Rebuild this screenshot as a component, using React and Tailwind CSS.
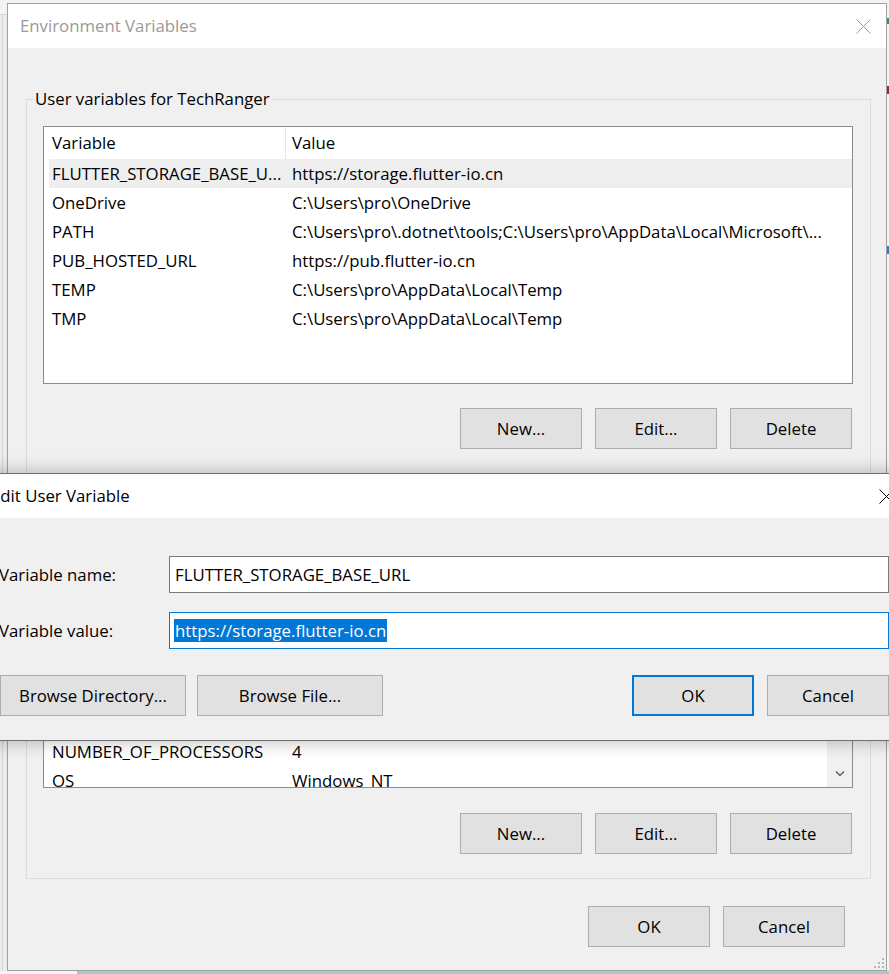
import React from 'react'

const userVars = [
  ['FLUTTER_STORAGE_BASE_U...', 'https://storage.flutter-io.cn', true],
  ['OneDrive', 'C:\\Users\\pro\\OneDrive'],
  ['PATH', 'C:\\Users\\pro\\.dotnet\\tools;C:\\Users\\pro\\AppData\\Local\\Microsoft\\...'],
  ['PUB_HOSTED_URL', 'https://pub.flutter-io.cn'],
  ['TEMP', 'C:\\Users\\pro\\AppData\\Local\\Temp'],
  ['TMP', 'C:\\Users\\pro\\AppData\\Local\\Temp'],
]

// only the last two rows peek out below the edit dialog
const systemVars = [
  ['NUMBER_OF_PROCESSORS', '4'],
  ['OS', 'Windows_NT'],
]

function CloseX({ color }) {
  return (
    <svg width="15" height="15" viewBox="0 0 15 15" className="shrink-0">
      <path d="M0.5 0.5L14.5 14.5M14.5 0.5L0.5 14.5" stroke={color} strokeWidth="1" />
    </svg>
  )
}

function WinButton({ children, primary, w = 'w-[122px]', className = '' }) {
  const border = primary ? 'border-2 border-[#0078d7]' : 'border border-[#adadad]'
  return (
    <button
      className={
        'h-[41px] shrink-0 bg-[#e1e1e1] text-[16.8px] text-black ' + w + ' ' + border + ' ' + className
      }
    >
      {children}
    </button>
  )
}

function Row({ name, value, selected }) {
  return (
    <div className={'flex h-[29px] items-center whitespace-nowrap ' + (selected ? 'bg-[#eeeeee]' : '')}>
      <div className="w-[237px] shrink-0 overflow-hidden pl-[3px]">{name}</div>
      <div className="min-w-0 flex-1 overflow-hidden pl-[6px]">{value}</div>
    </div>
  )
}

function ButtonRow({ className = '' }) {
  return (
    <div className={'flex justify-end gap-[13px] pr-[1px] ' + className}>
      <WinButton>New...</WinButton>
      <WinButton>Edit...</WinButton>
      <WinButton>Delete</WinButton>
    </div>
  )
}

export default function App() {
  return (
    <div className="relative h-[974px] w-[889px] overflow-hidden bg-[#f4f4f4] font-['Open_Sans',sans-serif] text-[16.8px] text-black">
      {/* desktop bits around the window */}
      <div className="absolute left-0 top-[14px] h-[957px] w-[7px] border-t border-[#d4d4d4] bg-[#ececec]">
        <div className="ml-[2px] h-full w-px bg-[#d6d6d6]" />
      </div>
      <div className="absolute bottom-0 left-[77px] right-0 h-[3px] bg-[#a9c6d2]" />
      <div className="absolute right-0 top-[18px] h-[6px] w-[2px] bg-[#3d8b7d]" />
      <div className="absolute right-0 top-[86px] h-[8px] w-[2px] bg-[#8b2f2f]" />
      <div className="absolute right-0 top-[246px] h-[8px] w-[2px] bg-[#3a78b8]" />

      {/* Environment Variables window */}
      <div className="absolute left-[7px] top-[3px] flex h-[968px] w-[880px] flex-col border border-[#a0a0a0] bg-[#f0f0f0]">
        <div className="flex h-[44px] shrink-0 items-center justify-between bg-white pl-[12px] pr-[15px]">
          <span className="text-[#999999]">Environment Variables</span>
          <CloseX color="#9a9a9a" />
        </div>

        <div className="flex flex-1 flex-col pt-[41px]">
          <fieldset className="ml-[18px] mr-[15px] border border-[#dcdcdc] pb-[24px] pl-[7px] pr-[17px]">
            <legend className="px-[1px] leading-[20px]">User variables for TechRanger</legend>
            <div className="ml-[9px] mt-[17px] h-[258px] border border-[#8c8c8c] bg-white pl-[5px]">
              <div className="flex h-[32px] items-center whitespace-nowrap">
                <div className="w-[236px] shrink-0 pl-[3px]">Variable</div>
                <div className="h-full w-px bg-[#e5e5e5]" />
                <div className="flex-1 pl-[6px]">Value</div>
              </div>
              {userVars.map(([n, v, s]) => (
                <Row key={n} name={n} value={v} selected={s} />
              ))}
            </div>
            <ButtonRow className="mt-[24px]" />
          </fieldset>

          <fieldset className="ml-[18px] mr-[15px] mt-[18px] border border-[#dcdcdc] pb-[24px] pl-[7px] pr-[17px]">
            <div className="ml-[9px] mt-[27px] flex h-[268px] border border-[#8c8c8c] bg-white">
              <div className="flex min-w-0 flex-1 flex-col justify-end overflow-hidden pl-[5px]">
                <div className="mb-[-8px]">
                  {systemVars.map(([n, v]) => (
                    <Row key={n} name={n} value={v} />
                  ))}
                </div>
              </div>
              <div className="flex w-[25px] shrink-0 flex-col justify-end bg-[#f0f0f0]">
                <div className="flex h-[27px] items-center justify-center">
                  <svg width="10" height="7" viewBox="0 0 10 7">
                    <path d="M1 1.5L5 5.5L9 1.5" stroke="#606060" strokeWidth="1.4" fill="none" />
                  </svg>
                </div>
              </div>
            </div>
            <ButtonRow className="mt-[25px]" />
          </fieldset>

          <div className="mt-[27px] flex justify-end gap-[13px] pr-[41px]">
            <WinButton>OK</WinButton>
            <WinButton>Cancel</WinButton>
          </div>
        </div>

        <svg width="10" height="10" viewBox="0 0 10 10" className="absolute bottom-[2px] right-[2px]">
          <g fill="#b5b5b5">
            <rect x="8" y="0" width="2" height="2" />
            <rect x="4" y="4" width="2" height="2" />
            <rect x="8" y="4" width="2" height="2" />
            <rect x="0" y="8" width="2" height="2" />
            <rect x="4" y="8" width="2" height="2" />
            <rect x="8" y="8" width="2" height="2" />
          </g>
        </svg>
      </div>

      {/* Edit User Variable dialog */}
      <div className="absolute left-[-18px] top-[473px] flex h-[268px] w-[928px] flex-col border border-[#6e6e6e] bg-[#f0f0f0] shadow-[0_0_18px_rgba(0,0,0,0.28)]">
        <div className="flex h-[44px] shrink-0 items-center justify-between bg-white pl-[8px] pr-[15px]">
          <span>Edit User Variable</span>
          <CloseX color="#000000" />
        </div>
        <div className="flex-1 pl-[16px] pr-[20px] pt-[38px]">
          <div className="flex h-[37px] items-center">
            <span className="w-[170px] shrink-0">Variable name:</span>
            <div className="flex h-full flex-1 items-center border border-[#7a7a7a] bg-white pl-[5px]">
              FLUTTER_STORAGE_BASE_URL
            </div>
          </div>
          <div className="mt-[19px] flex h-[37px] items-center">
            <span className="w-[170px] shrink-0">Variable value:</span>
            <div className="flex h-full flex-1 items-center border border-[#0078d7] bg-white pl-[4px]">
              <span className="bg-[#0078d7] px-[1px] leading-[23px] text-white">https://storage.flutter-io.cn</span>
            </div>
          </div>
          <div className="mt-[26px] flex">
            <WinButton w="w-[186px]" className="ml-[1px]">
              Browse Directory...
            </WinButton>
            <WinButton w="w-[186px]" className="ml-[11px]">
              Browse File...
            </WinButton>
            <div className="flex-1" />
            <WinButton primary>OK</WinButton>
            <WinButton className="ml-[13px]">Cancel</WinButton>
          </div>
        </div>
      </div>
    </div>
  )
}
